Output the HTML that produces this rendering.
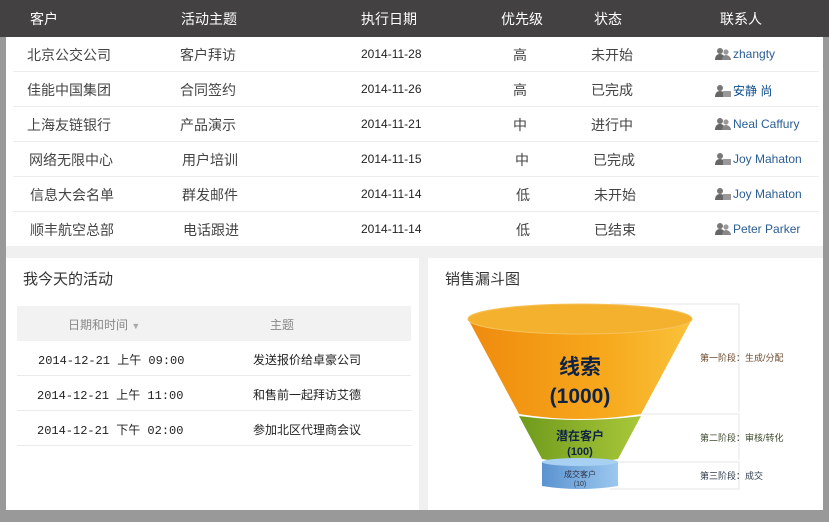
<!DOCTYPE html>
<html><head><meta charset="utf-8"><style>
*{margin:0;padding:0;box-sizing:border-box}
body{width:829px;height:522px;background:#999;position:relative;overflow:hidden;font-family:"Liberation Sans","Noto Sans CJK SC",sans-serif;}
.hdr{position:absolute;left:0;top:0;width:829px;height:37px;background:#434141;color:#fff;font-size:14px}
.hdr span,.row span{position:absolute;white-space:nowrap}
.tbl{position:absolute;left:6px;top:37px;width:817px;height:209px;background:#fff}
.row{position:absolute;left:7px;width:806px;height:35px;border-bottom:1px solid #ececec;font-size:14px;color:#444}
.row span{top:8px}
.row .d{font-size:12px;top:10px;color:#222}
.row .c{font-size:12px;color:#2a5d93;top:10px}
.ic{display:inline-block;width:16px;height:13px;vertical-align:-2px;margin-right:2px}
.strip{position:absolute;left:6px;top:246px;width:817px;height:12px;background:#f0f0f0}
.p1{position:absolute;left:6px;top:258px;width:413px;height:252px;background:#fff}
.gap{position:absolute;left:419px;top:258px;width:9px;height:252px;background:#f0f0f0}
.p2{position:absolute;left:428px;top:258px;width:395px;height:252px;background:#fff}
.ttl{position:absolute;font-size:15px;color:#333;top:10px}
.th{position:absolute;left:11px;top:48px;width:394px;height:35px;background:#f2f2f2;font-size:12px;color:#888}
.ar{position:absolute;left:11px;width:394px;height:35px;border-bottom:1px solid #eaeaea;font-size:12px;color:#222}
.ar span,.th span{position:absolute;top:10px;white-space:nowrap}
.mono{font-family:"Liberation Mono","Noto Sans CJK SC",monospace;font-size:12px}
</style></head><body>
<div class="hdr">
<span style="left:30px;top:9px">客户</span><span style="left:181px;top:9px">活动主题</span><span style="left:361px;top:9px">执行日期</span><span style="left:501px;top:9px">优先级</span><span style="left:594px;top:9px">状态</span><span style="left:720px;top:9px">联系人</span>
</div>
<div class="tbl">
<div class="row" style="top:0"><span style="left:14px">北京公交公司</span><span style="left:167px">客户拜访</span><span class="d" style="left:348px">2014-11-28</span><span style="left:500px">高</span><span style="left:578px">未开始</span><span class="c" style="left:702px"><svg class="ic" viewBox="0 0 16 13"><circle cx="5" cy="4" r="3" fill="#777"/><path d="M0 13c0-4 2-6 5-6s5 2 5 6z" fill="#666"/><circle cx="11" cy="5" r="2.6" fill="#999"/><path d="M7 13c0-3 2-5 4-5s5 2 5 5z" fill="#888"/></svg>zhangty</span></div>
<div class="row" style="top:35px"><span style="left:14px">佳能中国集团</span><span style="left:167px">合同签约</span><span class="d" style="left:348px">2014-11-26</span><span style="left:500px">高</span><span style="left:578px">已完成</span><span class="c" style="left:702px;color:#0b4b8c"><svg class="ic" viewBox="0 0 16 13"><circle cx="5" cy="4" r="3" fill="#777"/><path d="M0 13c0-4 2-6 5-6s5 2 5 6z" fill="#666"/><rect x="8" y="7" width="8" height="6" fill="#999"/></svg>安静 尚</span></div>
<div class="row" style="top:70px"><span style="left:14px">上海友链银行</span><span style="left:167px">产品演示</span><span class="d" style="left:348px">2014-11-21</span><span style="left:500px">中</span><span style="left:578px">进行中</span><span class="c" style="left:702px"><svg class="ic" viewBox="0 0 16 13"><circle cx="5" cy="4" r="3" fill="#777"/><path d="M0 13c0-4 2-6 5-6s5 2 5 6z" fill="#666"/><circle cx="11" cy="5" r="2.6" fill="#999"/><path d="M7 13c0-3 2-5 4-5s5 2 5 5z" fill="#888"/></svg>Neal Caffury</span></div>
<div class="row" style="top:105px"><span style="left:16px">网络无限中心</span><span style="left:169px">用户培训</span><span class="d" style="left:348px">2014-11-15</span><span style="left:502px">中</span><span style="left:580px">已完成</span><span class="c" style="left:702px"><svg class="ic" viewBox="0 0 16 13"><circle cx="5" cy="4" r="3" fill="#777"/><path d="M0 13c0-4 2-6 5-6s5 2 5 6z" fill="#666"/><rect x="8" y="7" width="8" height="6" fill="#999"/></svg>Joy Mahaton</span></div>
<div class="row" style="top:140px"><span style="left:17px">信息大会名单</span><span style="left:169px">群发邮件</span><span class="d" style="left:348px">2014-11-14</span><span style="left:503px">低</span><span style="left:581px">未开始</span><span class="c" style="left:702px"><svg class="ic" viewBox="0 0 16 13"><circle cx="5" cy="4" r="3" fill="#777"/><path d="M0 13c0-4 2-6 5-6s5 2 5 6z" fill="#666"/><rect x="8" y="7" width="8" height="6" fill="#999"/></svg>Joy Mahaton</span></div>
<div class="row" style="top:175px"><span style="left:17px">顺丰航空总部</span><span style="left:170px">电话跟进</span><span class="d" style="left:348px">2014-11-14</span><span style="left:503px">低</span><span style="left:581px">已结束</span><span class="c" style="left:702px"><svg class="ic" viewBox="0 0 16 13"><circle cx="5" cy="4" r="3" fill="#777"/><path d="M0 13c0-4 2-6 5-6s5 2 5 6z" fill="#666"/><circle cx="11" cy="5" r="2.6" fill="#999"/><path d="M7 13c0-3 2-5 4-5s5 2 5 5z" fill="#888"/></svg>Peter Parker</span></div>
</div>
<div class="strip"></div>
<div class="p1">
<div class="ttl" style="left:17px">我今天的活动</div>
<div class="th"><span style="left:51px">日期和时间 <span style="position:static;color:#aaa;font-size:9px">▼</span></span><span style="left:253px">主题</span></div>
<div class="ar" style="top:83px"><span class="mono" style="left:21px">2014-12-21 上午 09:00</span><span style="left:236px">发送报价给卓豪公司</span></div>
<div class="ar" style="top:118px"><span class="mono" style="left:20px">2014-12-21 上午 11:00</span><span style="left:236px">和售前一起拜访艾德</span></div>
<div class="ar" style="top:153px"><span class="mono" style="left:20px">2014-12-21 下午 02:00</span><span style="left:236px">参加北区代理商会议</span></div>
</div>
<div class="gap"></div>
<div class="p2">
<div class="ttl" style="left:17px">销售漏斗图</div>
<svg style="position:absolute;left:0;top:0" width="395" height="252" viewBox="428 258 395 252">
<defs>
<linearGradient id="o" x1="0" x2="1"><stop offset="0" stop-color="#ef8a0e"/><stop offset=".6" stop-color="#f7a81c"/><stop offset="1" stop-color="#f9c23a"/></linearGradient>
<linearGradient id="g" x1="0" x2="1"><stop offset="0" stop-color="#6f9a1c"/><stop offset="1" stop-color="#a9c83a"/></linearGradient>
<linearGradient id="b" x1="0" x2="1"><stop offset="0" stop-color="#5b93d0"/><stop offset="1" stop-color="#9cc8ef"/></linearGradient>
</defs>
<path d="M610 304H739V412M610 414H739V460M610 462H739V489H610" fill="none" stroke="#e6e6e6"/>
<path d="M519 416L542 459Q580 466 618 459L641 416Q580 424 519 416Z" fill="url(#g)"/>
<path d="M468 319L519 414Q580 424 641 414L692 319Z" fill="url(#o)"/>
<ellipse cx="580" cy="319" rx="112" ry="15" fill="#f4b12e" stroke="#f7c25a"/>
<path d="M542 462h76v24q-38 6-76 0z" fill="url(#b)"/>
<ellipse cx="580" cy="462" rx="38" ry="4" fill="#a8d0f2"/>
<text x="580" y="374" text-anchor="middle" font-size="21" font-weight="bold" fill="#0e2345" font-family="Liberation Sans,Noto Sans CJK SC,sans-serif">线索</text>
<text x="580" y="403" text-anchor="middle" font-size="21" font-weight="bold" fill="#0e2345" font-family="Liberation Sans,sans-serif">(1000)</text>
<text x="580" y="440" text-anchor="middle" font-size="12" font-weight="bold" fill="#0e2345" font-family="Liberation Sans,Noto Sans CJK SC,sans-serif">潜在客户</text>
<text x="580" y="455" text-anchor="middle" font-size="11" font-weight="bold" fill="#0e2345" font-family="Liberation Sans,sans-serif">(100)</text>
<text x="580" y="477" text-anchor="middle" font-size="8" fill="#334" font-family="Liberation Sans,Noto Sans CJK SC,sans-serif">成交客户</text>
<text x="580" y="486" text-anchor="middle" font-size="7" fill="#334" font-family="Liberation Sans,sans-serif">(10)</text>
<g font-size="9" fill="#6b4a2e" font-family="Liberation Sans,Noto Sans CJK SC,sans-serif">
<text x="700" y="361">第一阶段：生成/分配</text>
<text x="700" y="441" fill="#3d4a2e">第二阶段：审核/转化</text>
<text x="700" y="479" fill="#2e3a4a">第三阶段：成交</text>
</g>
</svg>
</div>
</body></html>
